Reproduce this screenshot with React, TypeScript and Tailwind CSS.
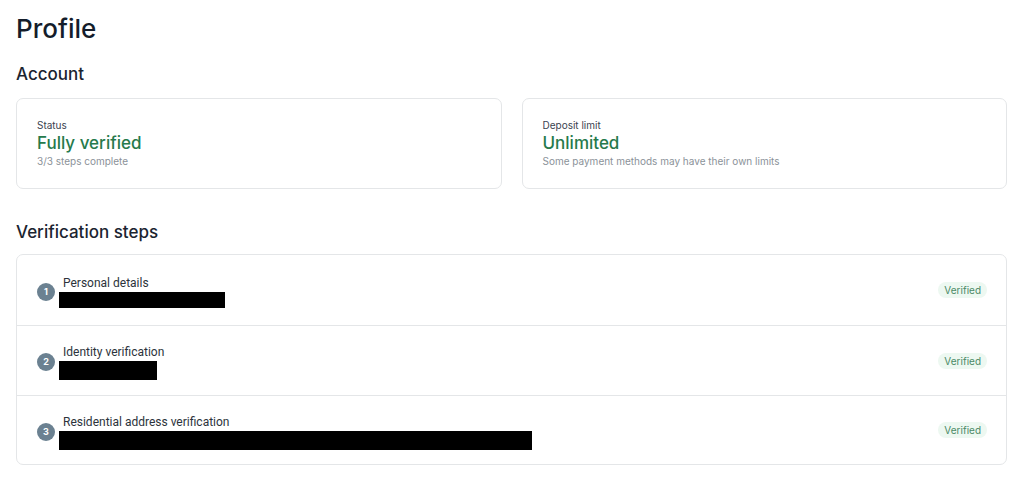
import React from "react";

const steps = [
  { id: 1, title: "Personal details", bar: "w-[166px] h-[16px]", row: "h-[70px]" },
  { id: 2, title: "Identity verification", bar: "w-[98px] h-[19px]", row: "h-[70px] border-t border-[#e4e6e8]" },
  { id: 3, title: "Residential address verification", bar: "w-[473px] h-[19px]", row: "h-[69px] border-t border-[#e4e6e8]" },
];

function InfoCard({ label, value, note }: { label: string; value: string; note: string }) {
  return (
    <div className="flex-1 rounded-[7px] border border-[#e4e6e8] bg-white px-5 pt-[19px] pb-5">
      <p className="text-[10px] leading-[14px] text-[#3a4350]">{label}</p>
      <p className="text-[17px] leading-[22px] font-medium text-[#267a4c]">{value}</p>
      <p className="text-[10px] leading-[14px] text-[#8b9299]">{note}</p>
    </div>
  );
}

export default function App() {
  return (
    <div className="min-h-screen bg-white pl-4 pr-[17px] pt-[13px] font-['Inter',sans-serif] text-[#1b2430]">
      <h1 className="text-[26px] leading-[32px] font-medium text-[#141d2b]">Profile</h1>

      <h2 className="mt-[17px] text-[17px] leading-[24px] font-medium">Account</h2>
      <div className="mt-3 flex gap-5">
        <InfoCard label="Status" value="Fully verified" note="3/3 steps complete" />
        <InfoCard
          label="Deposit limit"
          value="Unlimited"
          note="Some payment methods may have their own limits"
        />
      </div>

      <h2 className="mt-[31px] text-[17px] leading-[24px] font-medium">Verification steps</h2>
      <div className="mt-[10px] rounded-[7px] border border-[#e4e6e8] bg-white">
        {steps.map((step) => (
          <div
            key={step.id}
            className={`flex items-center justify-between pl-5 pr-[19px] pt-[3px] ${step.row}`}
          >
            <div className="flex items-center gap-1">
              <span className="flex h-[18px] w-[18px] items-center justify-center rounded-full bg-[#6b8191] text-[9px] font-bold text-white">
                {step.id}
              </span>
              <div className="flex flex-col">
                <span className="pl-1 font-['Roboto',sans-serif] text-[12px] leading-[16px] text-[#2c333b]">
                  {step.title}
                </span>
                <span className={`mt-[1px] block bg-black ${step.bar}`} />
              </div>
            </div>
            <span className="-mt-[3px] rounded-full bg-[#edf8f1] px-[6px] text-[10px] leading-[16px] text-[#4b8a66]">
              Verified
            </span>
          </div>
        ))}
      </div>
    </div>
  );
}
